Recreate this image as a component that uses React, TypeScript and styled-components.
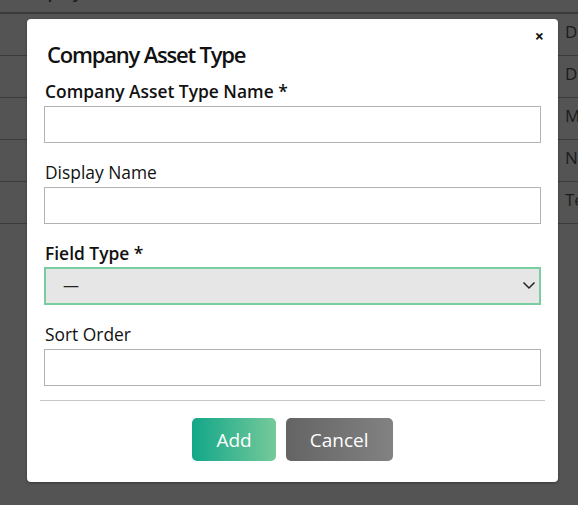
import React from "react";
import styled, { createGlobalStyle } from "styled-components";

const Global = createGlobalStyle`
  html, body { margin: 0; padding: 0; }
  body {
    font-family: "Open Sans", "Noto Sans", "Liberation Sans", sans-serif;
    background: #545454;
    overflow: hidden;
  }
  * { box-sizing: border-box; }
`;

const Page = styled.div`
  width: 578px;
  height: 505px;
  background: #545454;
  position: relative;
  overflow: hidden;
`;

const Table = styled.div`
  display: flex;
  flex-direction: column;
`;

const HeaderRow = styled.div`
  height: 14px;
  display: flex;
  align-items: flex-end;
  overflow: hidden;
  border-bottom: 2px solid #3a3a3a;
`;

const HeaderText = styled.div`
  padding: 0 0 10px 22px;
  font-size: 17px;
  line-height: 20px;
  font-weight: 600;
  color: #1c1c1c;
`;

const Row = styled.div`
  height: 42px;
  display: flex;
  border-bottom: 1px solid #3c3c3c;
`;

const Spacer = styled.div`
  flex: 1;
`;

const LastCell = styled.div`
  width: 20px;
  padding-left: 7px;
  overflow: hidden;
  white-space: nowrap;
  font-size: 17px;
  line-height: 36px;
  color: #1c1c1c;
`;

const Modal = styled.div`
  position: absolute;
  top: 19px;
  left: 27px;
  width: 531px;
  height: 463px;
  background: #ffffff;
  border-radius: 4px;
  box-shadow: 0 1px 3px rgba(0, 0, 0, 0.35);
  padding: 20px 17px 22px 17px;
  display: flex;
  flex-direction: column;
`;

const Close = styled.button`
  position: absolute;
  top: 7px;
  right: 14px;
  border: none;
  background: none;
  padding: 0;
  font-family: inherit;
  font-size: 16px;
  font-weight: 700;
  line-height: 20px;
  color: #111;
  cursor: pointer;
`;

const Title = styled.h2`
  margin: 0 0 10px 3px;
  font-size: 22px;
  line-height: 30px;
  font-weight: 600;
  letter-spacing: -1.2px;
  color: #111;
`;

const Field = styled.div<{ $last?: boolean }>`
  display: flex;
  flex-direction: column;
  margin-bottom: ${(p) => (p.$last ? "14px" : "17px")};
`;

const Label = styled.label<{ $required?: boolean }>`
  display: block;
  margin: 0 0 3px 1px;
  font-size: 17.4px;
  line-height: 24px;
  font-weight: ${(p) => (p.$required ? 600 : 400)};
  color: #111;
`;

const Input = styled.input`
  height: 37px;
  width: 100%;
  border: 1px solid #b3b3b3;
  background: #fff;
  padding: 0 10px;
  font-family: inherit;
  font-size: 16px;
  outline: none;
`;

const SelectBox = styled.div`
  position: relative;
  height: 38px;
  margin-top: -1px;
`;

const Select = styled.select`
  appearance: none;
  -webkit-appearance: none;
  width: 100%;
  height: 100%;
  border: 2px solid #7acd9f;
  background: #e6e6e6;
  padding: 0 40px 2px 17px;
  font-family: inherit;
  font-size: 16px;
  color: #222;
  outline: none;
`;

const Chevron = styled.svg`
  position: absolute;
  right: 5px;
  top: 14px;
  pointer-events: none;
`;

const Divider = styled.hr`
  border: none;
  border-top: 1px solid #c8c8c8;
  margin: 0 -4px 17px -4px;
`;

const Actions = styled.div`
  display: flex;
  justify-content: center;
  gap: 10px;
`;

const Button = styled.button<{ $variant: "primary" | "secondary" }>`
  height: 43px;
  padding: 0 24px;
  border: none;
  border-radius: 5px;
  font-family: inherit;
  font-size: 19px;
  color: #fff;
  cursor: pointer;
  background: ${(p) =>
    p.$variant === "primary"
      ? "linear-gradient(90deg, #12a789 0%, #76c99a 100%)"
      : "linear-gradient(90deg, #646464 0%, #828282 100%)"};
`;

export default function App() {
  const cells = ["D", "D", "M", "N", "Te"];
  return (
    <Page>
      <Global />
      <Table>
        <HeaderRow>
          <HeaderText>Display</HeaderText>
        </HeaderRow>
        {cells.map((c, i) => (
          <Row key={i}>
            <Spacer />
            <LastCell>{c}</LastCell>
          </Row>
        ))}
      </Table>
      <Modal>
        <Close aria-label="Close">×</Close>
        <Title>Company Asset Type</Title>
        <Field>
          <Label $required>Company Asset Type Name *</Label>
          <Input type="text" />
        </Field>
        <Field>
          <Label>Display Name</Label>
          <Input type="text" />
        </Field>
        <Field>
          <Label $required>Field Type *</Label>
          <SelectBox>
            <Select defaultValue="">
              <option value="">—</option>
            </Select>
            <Chevron width="14" height="9" viewBox="0 0 14 9">
              <polyline
                points="1.5,1.5 7,7 12.5,1.5"
                fill="none"
                stroke="#222"
                strokeWidth="1.5"
              />
            </Chevron>
          </SelectBox>
        </Field>
        <Field $last>
          <Label>Sort Order</Label>
          <Input type="text" />
        </Field>
        <Divider />
        <Actions>
          <Button $variant="primary">Add</Button>
          <Button $variant="secondary">Cancel</Button>
        </Actions>
      </Modal>
    </Page>
  );
}
